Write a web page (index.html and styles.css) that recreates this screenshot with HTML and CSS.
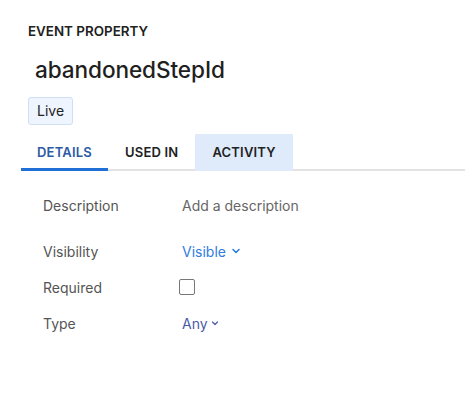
FILE: index.html
```html
<!DOCTYPE html>
<html>
<head>
<meta charset="utf-8">
<link rel="stylesheet" href="styles.css">
</head>
<body>
<div class="page">
  <div class="header">
    <div class="kicker">EVENT PROPERTY</div>
    <h1 class="title">abandonedStepId</h1>
    <span class="badge">Live</span>
  </div>
  <div class="tabs">
    <div class="tab active">DETAILS</div>
    <div class="tab">USED IN</div>
    <div class="tab hover">ACTIVITY</div>
  </div>
  <div class="props">
    <div class="row row-desc">
      <div class="label">Description</div>
      <div class="value placeholder">Add a description</div>
    </div>
    <div class="row">
      <div class="label">Visibility</div>
      <div class="value link">Visible
        <svg class="chev" width="10" height="10" viewBox="0 0 10 10"><path d="M2 3.5 L5 6.5 L8 3.5" fill="none" stroke="currentColor" stroke-width="1.6" stroke-linecap="round" stroke-linejoin="round"/></svg>
      </div>
    </div>
    <div class="row">
      <div class="label">Required</div>
      <div class="value"><span class="checkbox"></span></div>
    </div>
    <div class="row">
      <div class="label">Type</div>
      <div class="value type">Any
        <svg class="chev small" width="8" height="8" viewBox="0 0 8 8"><path d="M1.5 3 L4 5.5 L6.5 3" fill="none" stroke="currentColor" stroke-width="1.2" stroke-linecap="round" stroke-linejoin="round"/></svg>
      </div>
    </div>
  </div>
</div>
</body>
</html>
```

FILE: styles.css
```css
* { box-sizing: border-box; }
html, body { margin: 0; padding: 0; background: #fff; }
body {
  font-family: Inter, "Noto Sans", "Liberation Sans", sans-serif;
  color: #222;
}
.page {
  padding: 21px 0 0 21px;
}
.header {
  padding-left: 7px;
}
.kicker {
  font-size: 13.4px;
  font-weight: 600;
  line-height: 20px;
  color: #222;
}
.title {
  margin: 14px 0 0 7px;
  font-size: 22.6px;
  font-weight: 500;
  line-height: 30px;
  color: #1f1f1f;
  letter-spacing: -0.1px;
}
.badge {
  display: inline-block;
  margin-top: 12px;
  height: 28px;
  padding: 0 8px;
  line-height: 26px;
  font-size: 14px;
  color: #222;
  background: #eef5fe;
  border: 1px solid #cfe0f5;
  border-radius: 3px;
}
.tabs {
  display: flex;
  margin-top: 9px;
  border-bottom: 2px solid #e2e2e2;
  height: 37px;
}
.tab {
  height: 35px;
  padding: 0 16px;
  line-height: 36px;
  font-size: 13px;
  font-weight: 600;
  color: #222;
  letter-spacing: 0.2px;
}
.tab.active {
  color: #2d5aa4;
  box-shadow: inset 0 -3px 0 #1f6fd6;
  height: 37px;
  margin-bottom: -2px;
}
.tab:nth-child(2) { padding: 0 17px; }
.tab.hover {
  background: #dfebfb;
  height: 37px;
  margin-bottom: -2px;
  padding: 0 17px;
}
.props {
  padding: 21px 0 0 22px;
}
.row {
  display: flex;
  align-items: center;
  height: 36px;
  font-size: 14px;
}
.row-desc {
  height: 26px;
  margin-bottom: 15px;
}
.label {
  width: 139px;
  color: #555;
}
.value {
  display: flex;
  align-items: center;
  gap: 5px;
}
.placeholder { color: #666; }
.link { color: #2f7ddf; }
.type { color: #4b5aa8; gap: 3px; }
.checkbox {
  display: inline-block;
  width: 16px;
  height: 16px;
  border: 1.5px solid #777;
  border-radius: 2px;
  margin-left: -3px;
}
.chev { display: block; }
```
